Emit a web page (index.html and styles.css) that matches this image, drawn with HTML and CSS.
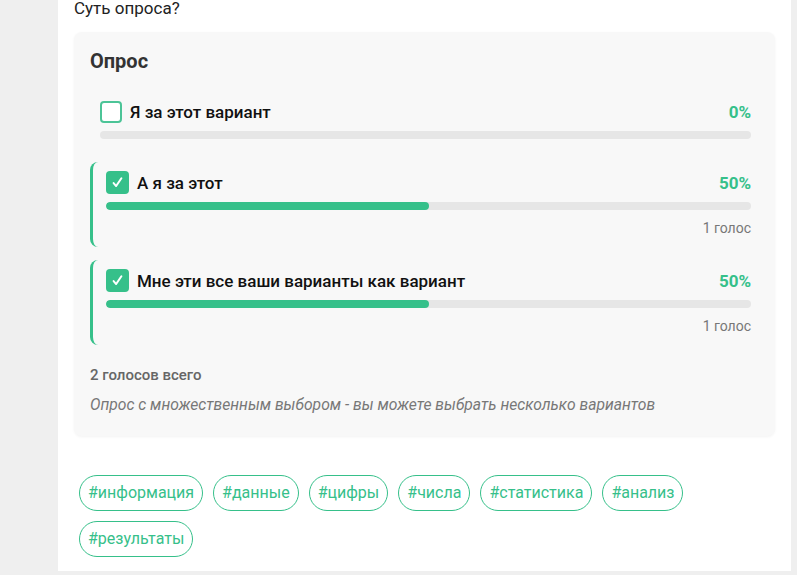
FILE: index.html
```html
<!DOCTYPE html>
<html lang="ru">
<head>
  <meta charset="UTF-8" />
  <title>Опрос</title>
  <link rel="stylesheet" href="styles.css">
</head>
<body>
  <div class="page">
    <div class="question">Суть опроса?</div>

    <!-- карточка опроса -->
    <div class="poll">
      <h2 class="poll-title">Опрос</h2>

      <div class="option">
        <div class="option-row">
          <span class="check"></span>
          <span class="option-text">Я за этот вариант</span>
          <span class="percent">0%</span>
        </div>
        <div class="bar"><div class="bar-fill" style="width: 0%"></div></div>
      </div>

      <div class="option selected">
        <div class="option-row">
          <span class="check checked">
            <svg viewBox="0 0 24 24" width="17" height="17"><path d="M6.5 12.8l3.6 4.2L17.5 6" fill="none" stroke="#fff" stroke-width="2.8" stroke-linecap="round" stroke-linejoin="round"/></svg>
          </span>
          <span class="option-text">А я за этот</span>
          <span class="percent">50%</span>
        </div>
        <div class="bar"><div class="bar-fill" style="width: 50%"></div></div>
        <div class="votes">1 голос</div>
      </div>

      <div class="option selected">
        <div class="option-row">
          <span class="check checked">
            <svg viewBox="0 0 24 24" width="17" height="17"><path d="M6.5 12.8l3.6 4.2L17.5 6" fill="none" stroke="#fff" stroke-width="2.8" stroke-linecap="round" stroke-linejoin="round"/></svg>
          </span>
          <span class="option-text">Мне эти все ваши варианты как вариант</span>
          <span class="percent">50%</span>
        </div>
        <div class="bar"><div class="bar-fill" style="width: 50%"></div></div>
        <div class="votes">1 голос</div>
      </div>

      <div class="total">2 голосов всего</div>
      <div class="note">Опрос с множественным выбором - вы можете выбрать несколько вариантов</div>
    </div>

    <!-- теги -->
    <div class="tags">
      <span class="tag">#информация</span>
      <span class="tag">#данные</span>
      <span class="tag">#цифры</span>
      <span class="tag">#числа</span>
      <span class="tag">#статистика</span>
      <span class="tag">#анализ</span>
      <span class="tag">#результаты</span>
    </div>
  </div>
</body>
</html>
```

FILE: styles.css
```css
/* основа */
body {
  margin: 0;
  background: #efefef;
  font-family: Roboto, 'Liberation Sans', sans-serif;
  color: #222;
}

.page {
  margin-left: 58px;
  width: 733px;
  min-height: 100vh;
  background: #fff;
  padding: 0 16px;
  box-sizing: border-box;
}

.question {
  font-size: 17px;
  line-height: 24px;
  margin-top: -4px;
  margin-bottom: 12px;
}

/* карточка опроса */
.poll {
  background: #f8f8f8;
  border-radius: 8px;
  box-shadow: 0 1px 3px rgba(0,0,0,0.05);
  padding: 16px 16px 21px;
}

.poll-title {
  margin: 0 0 17px;
  font-size: 20px;
  line-height: 26px;
  font-weight: 700;
  color: #333;
}

.option {
  padding: 9px 8px 11px 10px;
  margin-bottom: 12px;
  border-radius: 8px;
}
.option.selected {
  border-left: 3px solid #36c08a;
  padding-left: 13px;
  padding-bottom: 9px;
  margin-bottom: 13px;
}

.option-row {
  display: flex;
  align-items: center;
  height: 23px;
}

.check {
  width: 22px;
  height: 22px;
  box-sizing: border-box;
  border: 2px solid #4cc497;
  border-radius: 4px;
  background: #fff;
  margin-right: 8px;
  flex-shrink: 0;
}
.check.checked {
  width: 23px;
  height: 23px;
  border: none;
  background: #36c08a;
  display: flex;
  align-items: center;
  justify-content: center;
}

.option-text {
  flex: 1;
  font-size: 17px;
  font-weight: 500;
  color: #111;
}

.percent {
  font-size: 17px;
  font-weight: 700;
  color: #36c08a;
}

.bar {
  margin-top: 8px;
  height: 8px;
  border-radius: 4px;
  background: #e6e6e6;
  overflow: hidden;
}
.bar-fill {
  height: 100%;
  background: #36c08a;
  border-radius: 4px;
}

.votes {
  margin-top: 8px;
  text-align: right;
  font-size: 14px;
  line-height: 20px;
  color: #777;
}

.total {
  margin-top: 20px;
  font-size: 15px;
  line-height: 20px;
  font-weight: 500;
  color: #666;
}

.note {
  margin-top: 10px;
  font-size: 15.7px;
  line-height: 20px;
  font-style: italic;
  color: #777;
}

/* теги */
.tags {
  display: flex;
  flex-wrap: wrap;
  margin-top: 34px;
}
.tag {
  margin: 5px;
  padding: 7px 8px;
  border: 1px solid #36c08a;
  border-radius: 18px;
  color: #36c08a;
  font-size: 16px;
  line-height: 20px;
}
```
